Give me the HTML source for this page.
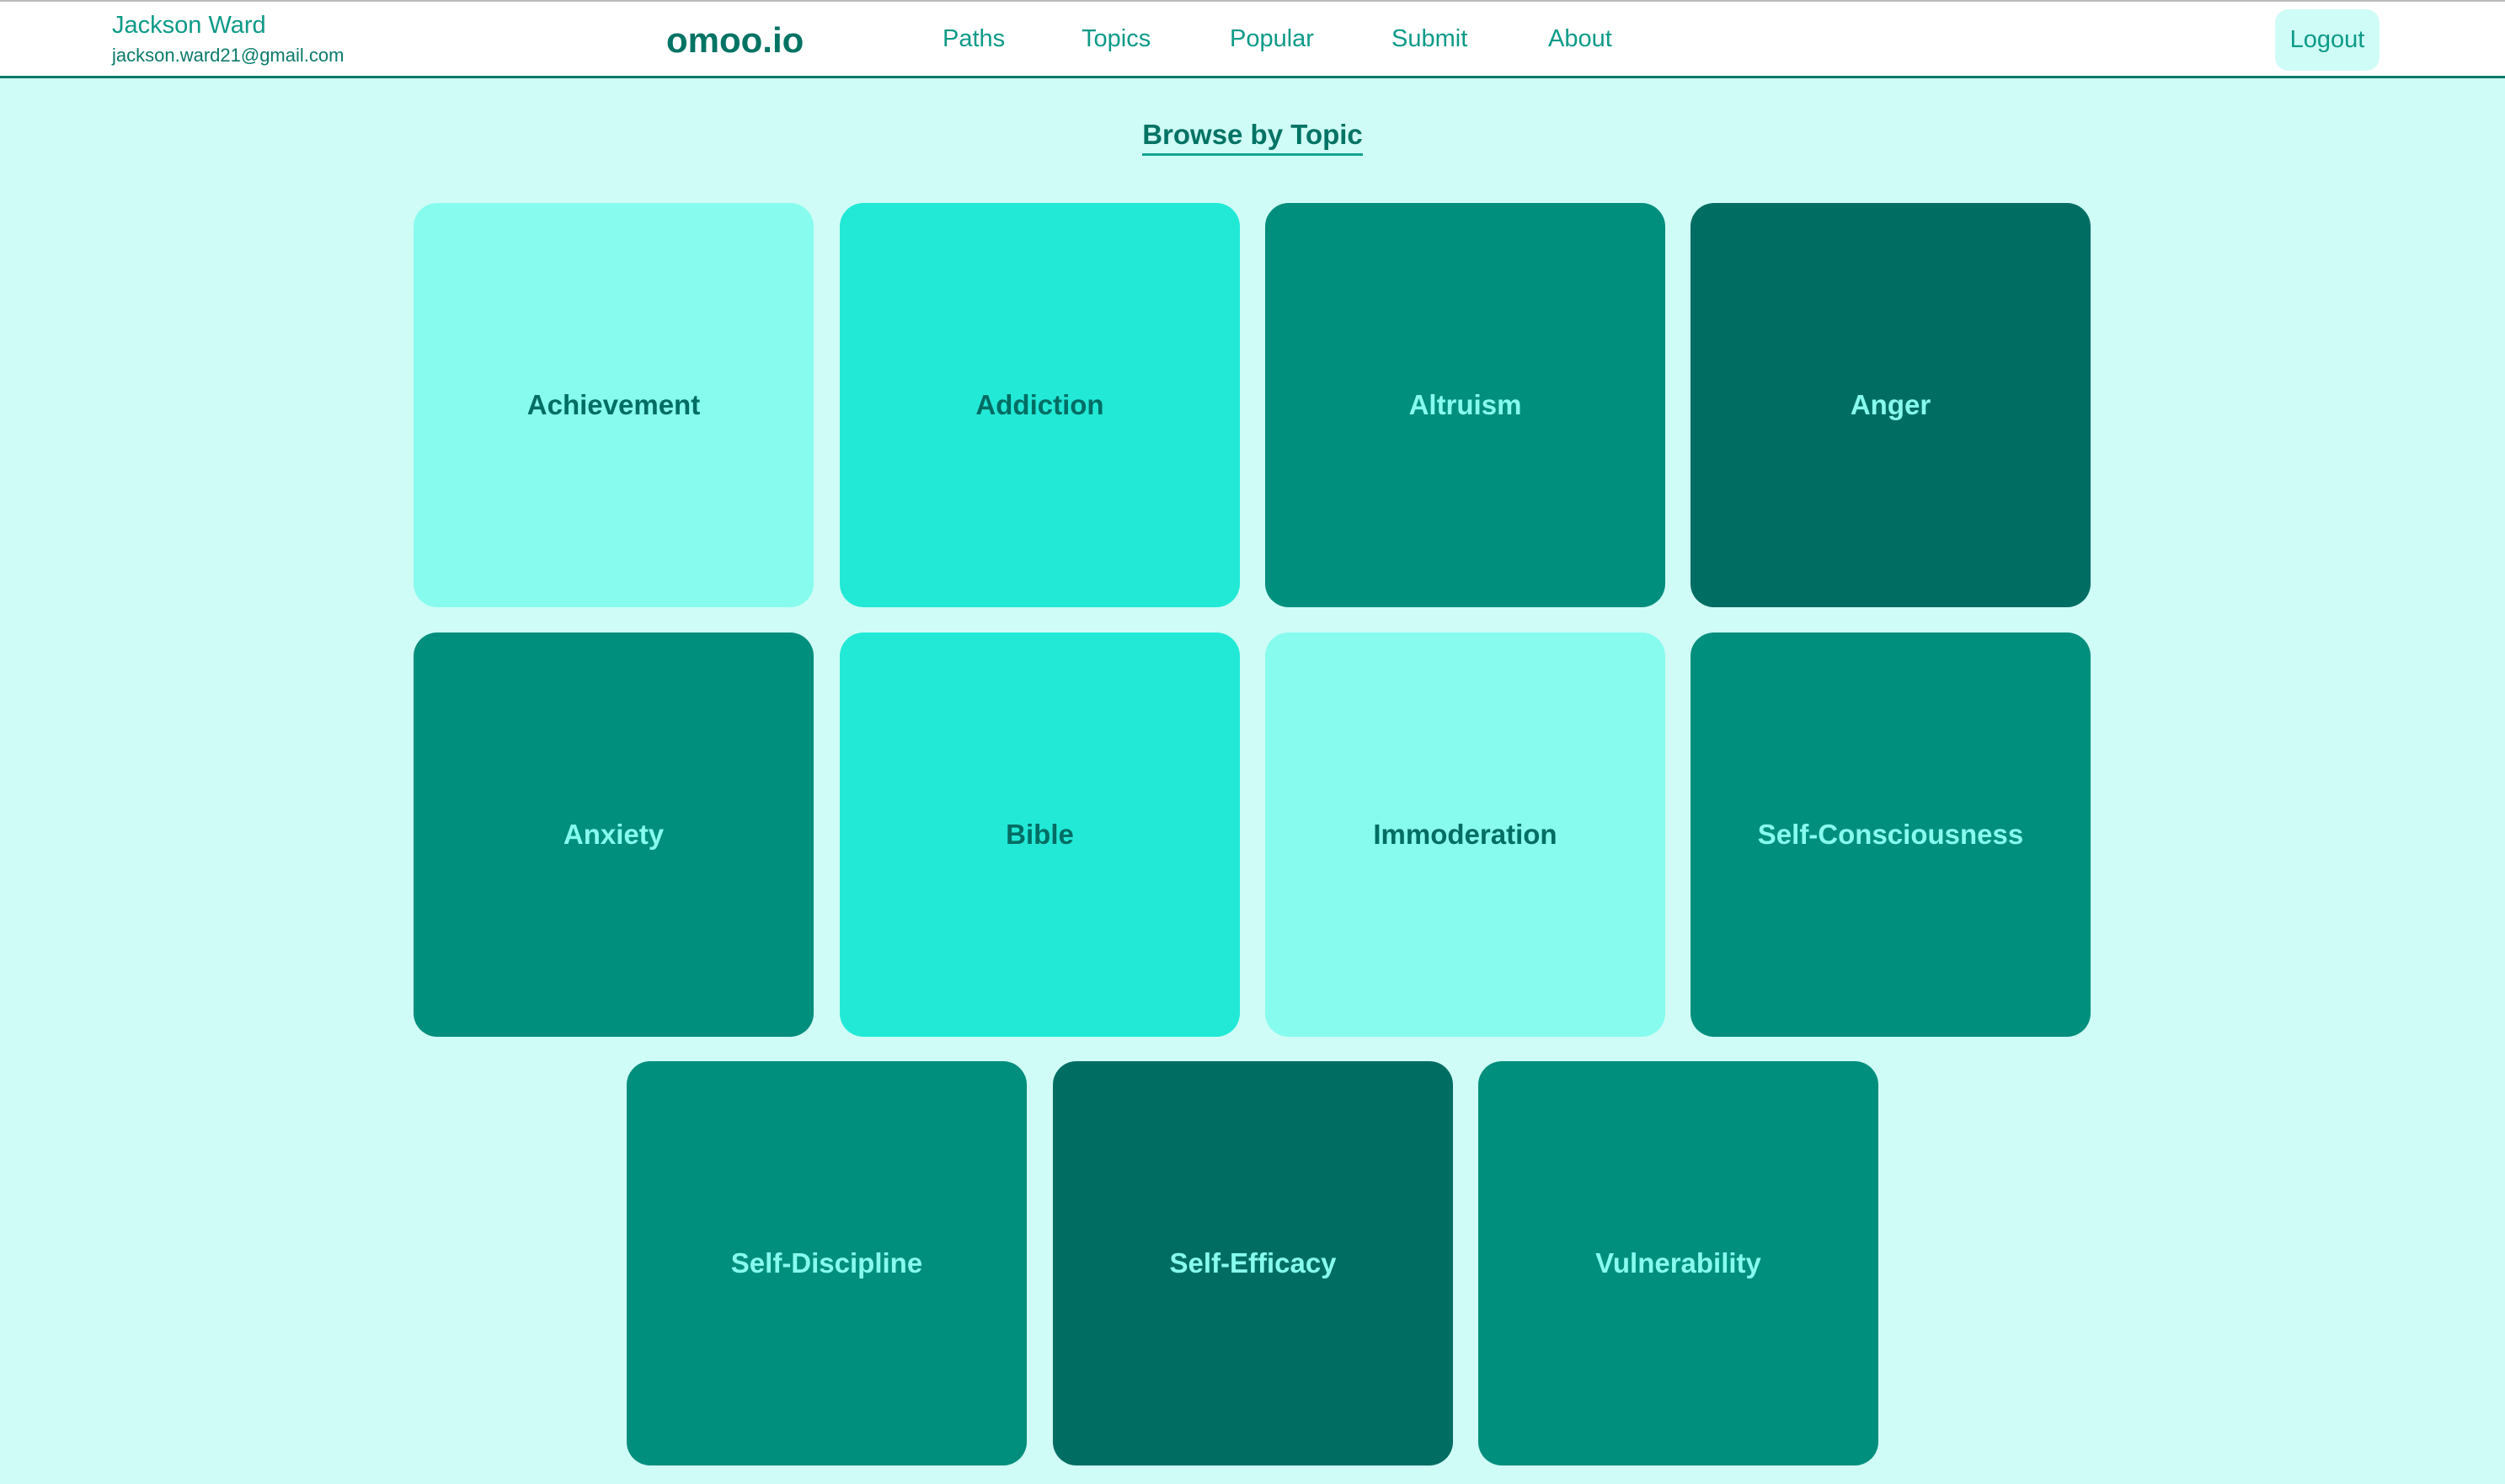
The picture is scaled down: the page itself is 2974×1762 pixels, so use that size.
<!DOCTYPE html>
<html><head><meta charset="utf-8"><style>
*{box-sizing:border-box;margin:0;padding:0}
html,body{width:2974px;height:1762px;overflow:hidden;background:#cffcf6;font-family:"Liberation Sans",sans-serif}
.hdr{position:absolute;left:0;top:0;width:2974px;height:93px;background:#fff;border-top:2px solid #bbb;border-bottom:3px solid #0a7a6a}
.name{position:absolute;left:133px;top:12px;font-size:29px;color:#0d9a88}
.email{position:absolute;left:133px;top:51px;font-size:22px;color:#0a7a6a}
.logo{position:absolute;left:791px;top:22px;font-size:42px;font-weight:bold;color:#007364}
.nav{position:absolute;top:28px;font-size:29px;color:#0d9a88}
.logout{position:absolute;left:2701px;top:9px;width:124px;height:73px;background:#cffcf6;border-radius:16px;color:#0d9a88;font-size:29px;text-align:center;line-height:73px}
.title{position:absolute;left:0;width:2974px;top:141px;text-align:center}
.title span{font-size:33px;font-weight:bold;color:#007364;border-bottom:3px solid #13a594;padding-bottom:4px}
.card{position:absolute;width:475px;height:480px;border-radius:28px;display:flex;align-items:center;justify-content:center;font-size:33px;font-weight:bold}
.l{background:#86fbee;color:#006d63}.m{background:#22e9d6;color:#006d63}.t{background:#008e7d;color:#86fbee}.d{background:#006d63;color:#86fbee}
</style></head><body>
<div class="hdr">
<div class="name">Jackson Ward</div>
<div class="email">jackson.ward21@gmail.com</div>
<div class="logo">omoo.io</div>
<div class="nav" style="left:1119px">Paths</div>
<div class="nav" style="left:1284px">Topics</div>
<div class="nav" style="left:1460px">Popular</div>
<div class="nav" style="left:1652px">Submit</div>
<div class="nav" style="left:1838px">About</div>
<div class="logout">Logout</div>
</div>
<div class="title"><span>Browse by Topic</span></div>
<div class="card l" style="left:491px;top:241px">Achievement</div>
<div class="card m" style="left:997px;top:241px">Addiction</div>
<div class="card t" style="left:1502px;top:241px">Altruism</div>
<div class="card d" style="left:2007px;top:241px">Anger</div>
<div class="card t" style="left:491px;top:751px">Anxiety</div>
<div class="card m" style="left:997px;top:751px">Bible</div>
<div class="card l" style="left:1502px;top:751px">Immoderation</div>
<div class="card t" style="left:2007px;top:751px">Self-Consciousness</div>
<div class="card t" style="left:744px;top:1260px">Self-Discipline</div>
<div class="card d" style="left:1250px;top:1260px">Self-Efficacy</div>
<div class="card t" style="left:1755px;top:1260px">Vulnerability</div>
</body></html>
